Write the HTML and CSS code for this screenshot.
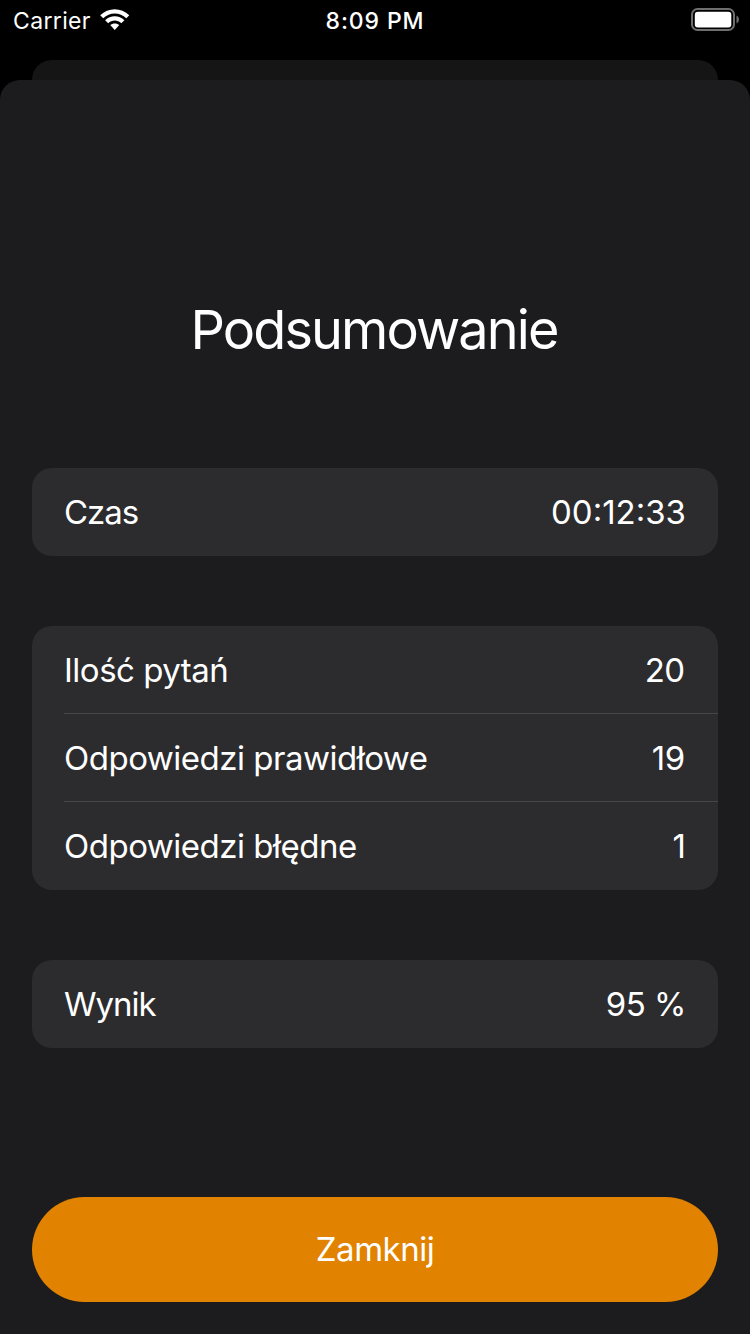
FILE: index.html
```html
<!DOCTYPE html>
<html lang="pl">
<head>
<meta charset="utf-8">
<title>Podsumowanie</title>
<link rel="stylesheet" href="styles.css">
</head>
<body>
<div class="screen">
  <header class="status">
    <div class="carrier"><span>Carrier</span>
      <svg class="wifi" width="30" height="23" viewBox="0 0 30 23" fill="#fff"><path d="M0.200 7.200C8.200-.9 21.300-.9 29.300 7.200L26.300 10.200C20 3.900 9.500 3.900 3.200 10.200zM5.100 12.200C10.300 7 19.200 7 24.400 12.200L21.300 15.300C17.700 11.700 11.800 11.700 8.200 15.300zM10.200 17.100C12.600 14.900 16.900 14.900 19.300 17.100L14.750 21.900z"/></svg>
    </div>
    <div class="clock">8:09 PM</div>
    <svg class="battery" width="48" height="23" viewBox="0 0 48 23"><rect x="1" y="1" width="42" height="21" rx="5.500" fill="none" stroke="#6e6e6e" stroke-width="2"/><rect x="3.800" y="3.700" width="36.500" height="15.800" rx="3" fill="#fff"/><path d="M45.500 7.500v8q2.500-1.200 2.500-4t-2.500-4z" fill="#6e6e6e"/></svg>
  </header>
  <div class="behind"></div>
  <main class="sheet">
    <h1>Podsumowanie</h1>
    <section class="card"><div class="row"><span class="short">Czas</span><span>00:12:33</span></div></section>
    <section class="card answers">
      <div class="row"><span class="label">Ilość pytań</span><span class="number">20</span></div>
      <div class="row"><span class="label">Odpowiedzi prawidłowe</span><span class="number">19</span></div>
      <div class="row"><span class="label">Odpowiedzi błędne</span><span>1</span></div>
    </section>
    <section class="card"><div class="row"><span class="short">Wynik</span><span class="percent">95 %</span></div></section>
    <button class="close">Zamknij</button>
  </main>
</div>
</body>
</html>
```
FILE: styles.css
```css
* { box-sizing: border-box; }
body { margin: 0; background: #000; color: #fff; font-family: Inter, sans-serif; }
.screen { width: 750px; height: 1334px; display: flex; flex-direction: column; overflow: hidden; }
.status { height: 60px; padding: 8px 13px 0; display: grid; grid-template-columns: 1fr auto 1fr; align-items: start; font-size: 23px; line-height: 26px; }
.carrier { display: flex; gap: 9px; letter-spacing: 0.35px; }
.wifi { margin-top: 0; }
.clock { font-weight: 550; letter-spacing: 0.9px; }
.battery { justify-self: end; margin-right: -2px; }
.behind { height: 20px; margin: 0 32px; background: #151515; border-radius: 20px 20px 0 0; flex: none; }
.sheet { flex: 1; display: flex; flex-direction: column; padding: 218px 32px 32px; background: #1c1c1e; border-radius: 20px 20px 0 0; }
h1 { margin: 0 0 106px; height: 64px; line-height: 64px; font-size: 54px; font-weight: 400; letter-spacing: -1.9px; text-align: center; text-indent: -2px; }
.card { background: #2c2c2e; border-radius: 20px; margin-bottom: 70px; font-size: 33px; line-height: 40px; }
.row { height: 88px; padding: 0 32px; display: flex; justify-content: space-between; align-items: center; border-bottom: 1px solid transparent; }
.label { letter-spacing: -0.5px; }
.short { letter-spacing: -1px; }
.number { letter-spacing: -0.6px; padding-right: 1.5px; }
.percent { letter-spacing: -0.5px; }
.answers .row { margin-left: 32px; padding-left: 0; border-color: #464649; }
.answers .row:last-child { border-color: transparent; }
.close { margin-top: auto; height: 105px; flex: none; padding: 0 0 1px; border: 0; border-radius: 53px; background: #e18300; color: #fff; font: 400 33px/40px Inter, sans-serif; letter-spacing: -0.5px; }
```
